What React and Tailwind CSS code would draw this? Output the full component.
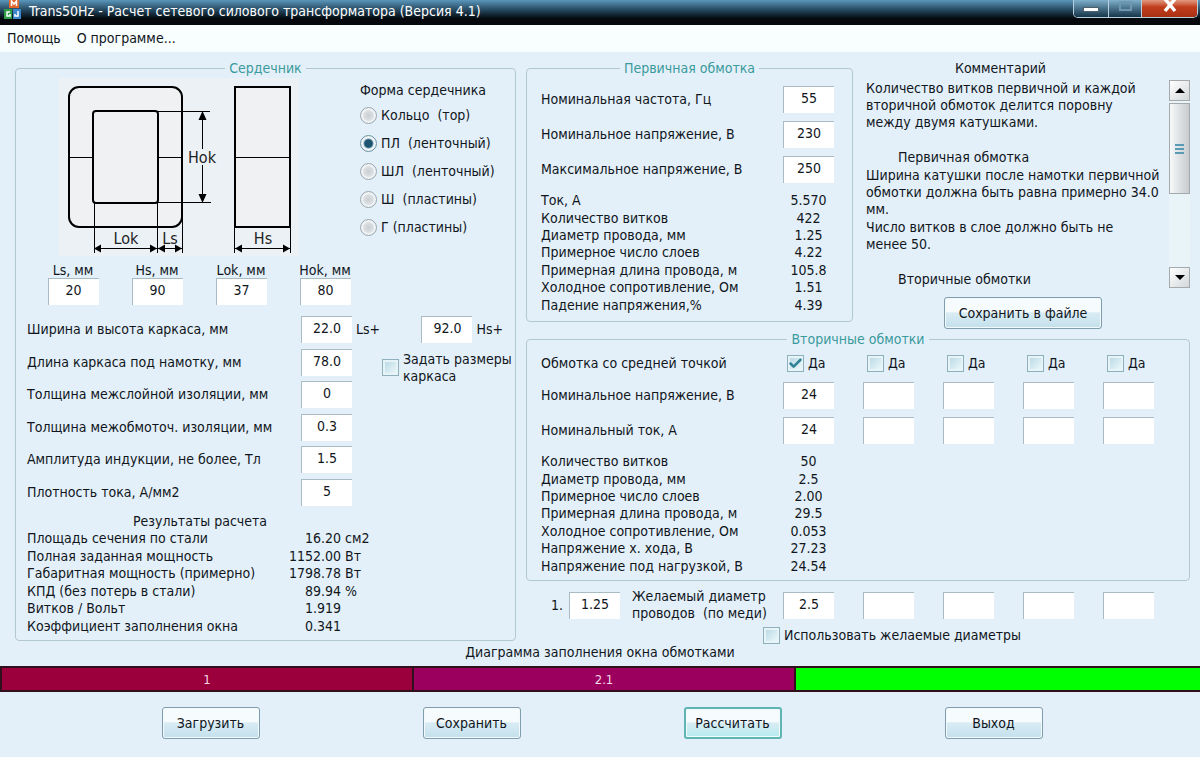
import { useState } from 'react';
import { Check } from 'lucide-react';

const coreShapes = ['Кольцо  (тор)', 'ПЛ  (ленточный)', 'ШЛ  (ленточный)', 'Ш  (пластины)', 'Г (пластины)'];

const coreSizes = [
  { id: 'ls', label: 'Ls, мм', value: '20' },
  { id: 'hs', label: 'Hs, мм', value: '90' },
  { id: 'lok', label: 'Lok, мм', value: '37' },
  { id: 'hok', label: 'Hok, мм', value: '80' },
];

const insulation = [
  { id: 'layer', label: 'Толщина межслойной изоляции, мм', value: '0' },
  { id: 'winding', label: 'Толщина межобмоточ. изоляции, мм', value: '0.3' },
  { id: 'induction', label: 'Амплитуда индукции, не более, Тл', value: '1.5' },
  { id: 'density', label: 'Плотность тока, А/мм2', value: '5' },
];

const results = [
  ['Площадь сечения по стали', '16.20', 'см2'],
  ['Полная заданная мощность', '1152.00', 'Вт'],
  ['Габаритная мощность (примерно)', '1798.78', 'Вт'],
  ['КПД (без потерь в стали)', '89.94', '%'],
  ['Витков / Вольт', '1.919', ''],
  ['Коэффициент заполнения окна', '0.341', ''],
];

const primaryInputs = [
  { id: 'freq', label: 'Номинальная частота, Гц', value: '55' },
  { id: 'unom', label: 'Номинальное напряжение, В', value: '230' },
  { id: 'umax', label: 'Максимальное напряжение, В', value: '250' },
];

const primaryResults = [
  ['Ток, А', '5.570'],
  ['Количество витков', '422'],
  ['Диаметр провода, мм', '1.25'],
  ['Примерное число слоев', '4.22'],
  ['Примерная длина провода, м', '105.8'],
  ['Холодное сопротивление, Ом', '1.51'],
  ['Падение напряжения,%', '4.39'],
];

const secondaryResults = [
  ['Количество витков', '50'],
  ['Диаметр провода, мм', '2.5'],
  ['Примерное число слоев', '2.00'],
  ['Примерная длина провода, м', '29.5'],
  ['Холодное сопротивление, Ом', '0.053'],
  ['Напряжение х. хода, В', '27.23'],
  ['Напряжение под нагрузкой, В', '24.54'],
];

const windings = [0, 1, 2, 3, 4];

const segments = [
  { label: '1', share: 412, color: 'bg-[#9c003c]' },
  { label: '2.1', share: 382, color: 'bg-[#9c005e]' },
  { label: '', share: 406, color: 'bg-[#00ff00]' },
];

const Field = ({ id, value = '', label }) => (
  <input
    id={id}
    type="text"
    aria-label={label}
    defaultValue={value}
    className="w-[51px] h-[27px] pb-1 text-center bg-white border-t border-l border-[#a9bcc6] outline-none"
  />
);

const CheckBox = ({ id, defaultChecked = false }) => (
  <span className="grid shrink-0 w-[17px] h-[17px]">
    <input
      id={id}
      type="checkbox"
      defaultChecked={defaultChecked}
      className="peer col-start-1 row-start-1 appearance-none w-[17px] h-[17px] border border-[#8fb0bd] bg-linear-to-br from-[#b3d6e2] to-[#f2fbfd] shadow-[inset_0_0_0_2px_#e6f4f8]"
    />
    <Check
      strokeWidth={4}
      className="col-start-1 row-start-1 place-self-center w-[15px] h-[15px] text-[#2f8296] opacity-0 peer-checked:opacity-100 pointer-events-none"
    />
  </span>
);

const Group = ({ title, className, inner, children }) => (
  <fieldset className={`min-w-0 rounded-[4px] border border-[#b3c8d3] ${className}`}>
    <legend className="mx-auto px-1 leading-[17px] text-[#3a9a9c]">{title}</legend>
    <div className={inner}>{children}</div>
  </fieldset>
);

const PushButton = ({ children, className = 'w-[98px] border-[#7f9dad] to-[#c3e0ec]' }) => (
  <button
    type="button"
    className={`h-8 rounded-[3px] border bg-linear-to-b from-[#f6fbfd] from-45% via-[#d9ecf4] via-50% shadow-[inset_0_0_0_1px_#f2fafd] ${className}`}
  >
    {children}
  </button>
);

const CoreDrawing = () => (
  <svg width="240" height="178" viewBox="58 78 240 178" className="shrink-0" aria-label="Размеры сердечника">
    <rect x="58" y="78" width="240" height="178" fill="#ecf1f5" />
    <g fill="#f0f1f2" stroke="#000" strokeWidth="2">
      <rect x="68" y="87" width="113" height="140" rx="10" />
      <rect x="92" y="111" width="65" height="92" rx="3" />
      <rect x="234" y="87" width="55" height="140" />
    </g>
    <g stroke="#000" strokeWidth="1" shapeRendering="crispEdges">
      <path d="M68 157.500H92M157 157.500H181M234 157.500H289" />
      <path d="M157 111.500H209M157 202.500H210M201.500 114V200" />
      <path d="M93.500 203V253M156.500 203V253M181.500 216V253M233.500 227V253M289.500 227V253" />
      <path d="M94 248.500H181M234 248.500H289" />
    </g>
    <g fill="#000">
      <path d="M201.500 111L205.500 120H197.500ZM201.500 203L205.500 194H197.500Z" />
      <path d="M93 248.500L100 244.500V252.500ZM156 248.500L149 244.500V252.500Z" />
      <path d="M157 248.500L164 244.500V252.500ZM181 248.500L174 244.500V252.500Z" />
      <path d="M234 248.500L241 244.500V252.500ZM289 248.500L282 244.500V252.500Z" />
    </g>
    <rect x="186" y="149" width="31" height="16" fill="#ecf1f5" />
    <g fontSize="16" textAnchor="middle" fill="#222">
      <text x="201" y="163">Hok</text>
      <text x="125" y="244">Lok</text>
      <text x="169" y="244">Ls</text>
      <text x="262" y="244">Hs</text>
    </g>
  </svg>
);

const TitleBar = () => (
  <header className="flex items-start h-[25px] overflow-hidden bg-linear-to-b from-[#5b97bb] via-[#1f3f55] via-45% to-[#05090e] to-75% text-white">
    <svg width="20" height="20" viewBox="0 0 20 20" className="ml-[3px] shrink-0">
      <rect x="6" y="0" width="10" height="8" fill="#e0662c" />
      <path d="M8.500 6V1L11 4L13.500 1V6" fill="none" stroke="#fff" strokeWidth="1.500" />
      <rect x="1" y="9" width="8" height="10" fill="#2f9c48" />
      <path d="M7 12H4V16H7V14" fill="none" stroke="#fff" strokeWidth="1.500" />
      <rect x="10" y="9" width="8" height="10" fill="#3c86cc" />
      <path d="M15 11V16H12V14" fill="none" stroke="#fff" strokeWidth="1.500" />
    </svg>
    <h1 className="ml-[6px] mt-[2px] leading-[18px]">Trans50Hz - Расчет сетевого силового трансформатора (Версия 4.1)</h1>
    <div className="ml-auto mr-[2px] flex h-[18px] rounded-b-[5px] border border-t-0 border-[#b9cfdb] overflow-hidden">
      <button type="button" aria-label="Свернуть" className="flex justify-center w-[35px] pt-[7px] bg-linear-to-b from-[#7fb0cc] to-[#16364b] border-r border-[#b9cfdb]">
        <span className="w-4 h-[5px] bg-white border border-[#4b5f6c]" />
      </button>
      <button type="button" aria-label="Развернуть" className="flex justify-center w-[33px] pt-[1px] bg-linear-to-b from-[#7fb0cc] to-[#16364b] border-r border-[#b9cfdb]">
        <span className="w-[13px] h-[10px] border-2 border-[#6f98b0]" />
      </button>
      <button type="button" aria-label="Закрыть" className="flex justify-center w-[55px] bg-linear-to-b from-[#e09a80] via-[#c23e1c] via-40% to-[#a93013]">
        <svg width="16" height="14" viewBox="0 0 16 14">
          <path d="M3 -1L13 11M13 -1L3 11" stroke="#fff" strokeWidth="3.500" />
        </svg>
      </button>
    </div>
  </header>
);

const CorePanel = () => {
  const [shape, setShape] = useState(1);

  return (
    <Group title="Сердечник" className="h-[581px]" inner="pl-[11px]">
      <div className="flex pl-8 pt-[1px]">
        <CoreDrawing />
        <fieldset className="ml-[61px] mt-1">
          <legend className="leading-[17px] whitespace-nowrap">Форма сердечника</legend>
          <div className="pt-[2px]">
            {coreShapes.map((name, i) => (
              <label key={name} className="flex items-center gap-1 h-7 whitespace-pre">
                <input
                  type="radio"
                  name="shape"
                  checked={shape === i}
                  onChange={() => setShape(i)}
                  className="appearance-none w-[17px] h-[17px] rounded-full border border-[#9aa7ae] bg-radial from-[#c9ced1] to-[#f3f6f7] shadow-[inset_0_0_0_2px_#f0f4f6] checked:border-[#6f93a3] checked:from-[#1c5570] checked:from-35% checked:to-[#cfe3ec] checked:to-50%"
                />
                {name}
              </label>
            ))}
          </div>
        </fieldset>
      </div>

      <div className="grid grid-cols-[repeat(4,84px)] pl-1 pt-[6px]">
        {coreSizes.map((s) => (
          <div key={s.id} className="flex flex-col items-center">
            <label htmlFor={s.id} className="leading-4">{s.label}</label>
            <Field id={s.id} value={s.value} />
          </div>
        ))}
      </div>

      <div className="grid grid-cols-[274px_51px_auto] items-center content-between h-[190px] mt-[11px] whitespace-nowrap">
        <label htmlFor="width">Ширина и высота каркаса, мм</label>
        <Field id="width" value="22.0" />
        <div className="flex items-center justify-between pl-1 pr-3">
          <span>Ls+</span>
          <span className="flex items-center gap-1">
            <Field label="Высота каркаса, мм" value="92.0" />
            Hs+
          </span>
        </div>

        <label htmlFor="length">Длина каркаса под намотку, мм</label>
        <Field id="length" value="78.0" />
        <label className="row-span-2 self-start flex items-center gap-1 pl-[30px] pt-[2px] leading-[17px]">
          <CheckBox id="custom" />
          <span>Задать размеры<br />каркаса</span>
        </label>

        {insulation.map((f, i) => (
          <div key={f.id} className={i === 0 ? 'contents' : 'col-span-3 grid grid-cols-[274px_51px] items-center'}>
            <label htmlFor={f.id}>{f.label}</label>
            <Field id={f.id} value={f.value} />
          </div>
        ))}
      </div>

      <table className="h-[105px] mt-[7px] leading-[17px]">
        <caption>Результаты расчета</caption>
        <tbody>
          {results.map(([name, value, unit]) => (
            <tr key={name}>
              <td className="w-[244px] p-0 whitespace-nowrap">{name}</td>
              <td className="w-[70px] p-0 text-right">{value}</td>
              <td className="w-8 p-0 pl-1">{unit}</td>
            </tr>
          ))}
        </tbody>
      </table>
    </Group>
  );
};

const ValueTable = ({ rows }) => (
  <table className="h-[122px] leading-[17px]">
    <tbody>
      {rows.map(([name, value]) => (
        <tr key={name}>
          <td className="w-[242px] p-0 whitespace-nowrap">{name}</td>
          <td className="w-[51px] p-0 text-center">{value}</td>
        </tr>
      ))}
    </tbody>
  </table>
);

const PrimaryPanel = () => (
  <Group title="Первичная обмотка" className="h-[262px]" inner="pl-[14px]">
    <div className="grid grid-cols-[242px_51px] items-center gap-y-2 pt-[9px] pb-[9px] whitespace-nowrap">
      {primaryInputs.map((f) => (
        <div key={f.id} className="contents">
          <label htmlFor={f.id}>{f.label}</label>
          <Field id={f.id} value={f.value} />
        </div>
      ))}
    </div>
    <ValueTable rows={primaryResults} />
  </Group>
);

const scrollButton = 'flex items-center justify-center w-[21px] h-[21px] border border-[#a3a9ac] bg-linear-to-br from-white to-[#d4d8da]';

const CommentPanel = () => (
  <section className="pl-[13px]">
    <h2 className="w-[269px] text-center leading-[17px]">Комментарий</h2>
    <div className="flex justify-between h-[208px] mt-[3px]">
      <div className="leading-[17px] whitespace-nowrap overflow-hidden">
        <p>
          Количество витков первичной и каждой<br />
          вторичной обмоток делится поровну<br />
          между двумя катушками.
        </p>
        <h3 className="pl-8 mt-[18px]">Первичная обмотка</h3>
        <p className="mt-[1px]">
          Ширина катушки после намотки первичной<br />
          обмотки должна быть равна примерно 34.0<br />
          мм.
        </p>
        <p className="mt-[1px]">
          Число витков в слое должно быть не<br />
          менее 50.
        </p>
        <h3 className="pl-8 mt-[18px]">Вторичные обмотки</h3>
      </div>
      <div className="flex flex-col shrink-0 w-[21px] bg-[#e9f4f8]">
        <button type="button" aria-label="Вверх" className={scrollButton}>
          <span className="border-x-5 border-b-5 border-x-transparent border-b-black" />
        </button>
        <div className="flex flex-col items-center justify-center gap-[2px] h-[91px] mt-[2px] border border-[#a3a9ac] bg-linear-to-r from-[#f7f9fa] to-[#c6cbce]">
          <span className="w-[9px] h-[2px] bg-[#5a9ab4]" />
          <span className="w-[9px] h-[2px] bg-[#5a9ab4]" />
          <span className="w-[9px] h-[2px] bg-[#5a9ab4]" />
        </div>
        <button type="button" aria-label="Вниз" className={`mt-auto ${scrollButton}`}>
          <span className="border-x-5 border-t-5 border-x-transparent border-t-black" />
        </button>
      </div>
    </div>
    <div className="flex justify-center mt-[9px] pr-[10px]">
      <PushButton className="w-[158px] border-[#7f9dad] to-[#c3e0ec]">Сохранить в файле</PushButton>
    </div>
  </section>
);

const secondaryGrid = 'grid grid-cols-[242px_repeat(5,80px)] items-center whitespace-nowrap';

const SecondaryPanel = () => (
  <Group title="Вторичные обмотки" className="h-[250px]" inner="pl-[14px]">
    <div className={`${secondaryGrid} h-[17px] mt-[7px]`}>
      <span>Обмотка со средней точкой</span>
      {windings.map((n) => (
        <label key={n} className="flex items-center gap-1 pl-1">
          <CheckBox id={`mid-${n}`} defaultChecked={n === 0} />
          Да
        </label>
      ))}
    </div>
    <div className={`${secondaryGrid} gap-y-2 pt-[10px] pb-[9px]`}>
      <span>Номинальное напряжение, В</span>
      {windings.map((n) => (
        <Field key={n} label={`Номинальное напряжение обмотки ${n + 1}`} value={n === 0 ? '24' : ''} />
      ))}
      <span>Номинальный ток, А</span>
      {windings.map((n) => (
        <Field key={n} label={`Номинальный ток обмотки ${n + 1}`} value={n === 0 ? '24' : ''} />
      ))}
    </div>
    <ValueTable rows={secondaryResults} />
  </Group>
);

const WireRow = () => (
  <div className="pl-[15px]">
    <div className={`${secondaryGrid} mt-[7px]`}>
      <div className="flex items-center pl-[10px]">
        <label htmlFor="wire" className="w-[18px]">1.</label>
        <Field id="wire" value="1.25" />
        <span className="ml-3 leading-[17px] whitespace-pre">Желаемый диаметр<br />проводов  (по меди)</span>
      </div>
      {windings.map((n) => (
        <Field key={n} label={`Желаемый диаметр ${n + 1}`} value={n === 0 ? '2.5' : ''} />
      ))}
    </div>
    <label className="flex items-center gap-1 w-max h-[17px] mt-[5px] ml-[222px]">
      <CheckBox id="use-wires" />
      Использовать желаемые диаметры
    </label>
  </div>
);

const App = () => (
  <div className="min-h-screen flex flex-col bg-[#e4f0f9] text-[14px] leading-[17px] text-[#10161c] font-['DejaVu_Sans_Condensed','Noto_Sans',sans-serif]">
    <TitleBar />
    <nav className="flex items-center gap-4 h-[27px] pl-[7px] bg-[#f8fdfe]">
      <button type="button">Помощь</button>
      <button type="button">О программе...</button>
    </nav>

    <main className="grid grid-cols-[501fr_664fr] gap-x-[10px] pt-2 pl-[15px] pr-[10px]">
      <CorePanel />
      <div className="min-w-0">
        <div className="grid grid-cols-[327fr_337fr]">
          <PrimaryPanel />
          <CommentPanel />
        </div>
        <div className="mt-[2px]">
          <SecondaryPanel />
        </div>
        <WireRow />
      </div>
    </main>

    <section>
      <h2 className="text-center leading-[17px]">Диаграмма заполнения окна обмотками</h2>
      <div className="flex h-[26px] mt-[5px] border-y-2 border-[#30101c] text-[13px] text-[#f4d8e4]">
        {segments.map((s) => (
          <div
            key={s.color}
            className={`flex items-center justify-center border-l-2 border-[#30101c] ${s.color}`}
            style={{ flexGrow: s.share, flexBasis: 0 }}
          >
            {s.label}
          </div>
        ))}
      </div>
    </section>

    <footer className="grid grid-cols-4 justify-items-center pl-20 pr-19 py-[15px]">
      <PushButton>Загрузить</PushButton>
      <PushButton>Сохранить</PushButton>
      <PushButton className="w-[98px] border-2 border-[#5fb5b3] to-[#b5ebee]">Рассчитать</PushButton>
      <PushButton>Выход</PushButton>
    </footer>
  </div>
);

export default App;
